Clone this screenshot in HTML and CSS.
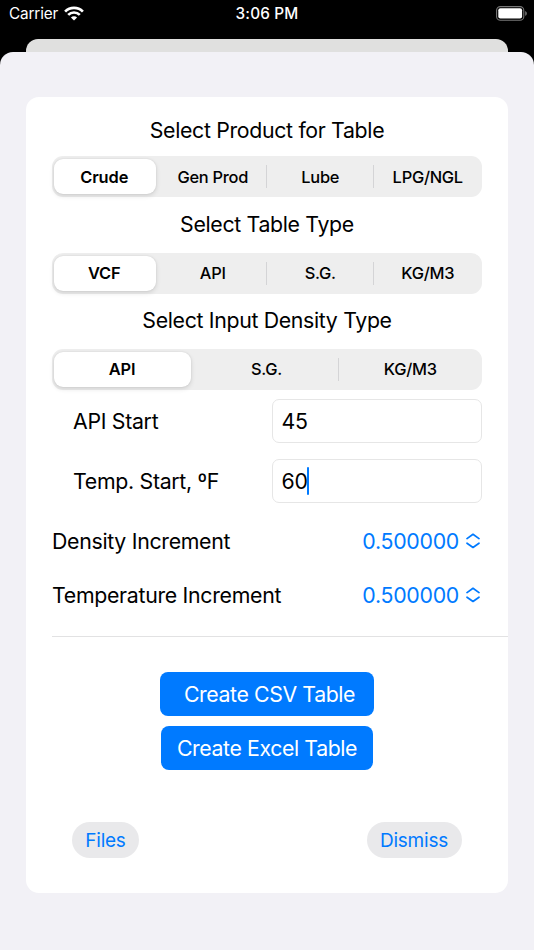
FILE: index.html
```html
<!DOCTYPE html>
<html lang="en">
<head>
<meta charset="utf-8">
<title>Create Table</title>
<link rel="stylesheet" href="styles.css">
</head>
<body>
<header class="status">
  <div class="status-left">
    <span class="carrier">Carrier</span>
    <svg class="wifi" viewBox="0 0 20 15" width="20" height="15">
      <g fill="none" stroke="#fff" stroke-width="2.7">
        <path d="M1.1 5.6A12.6 12.6 0 0 1 18.9 5.6"/>
        <path d="M4.2 8.9A8.2 8.2 0 0 1 15.8 8.9"/>
      </g>
      <path d="M10 14.6L6.9 11.5A4.4 4.4 0 0 1 13.1 11.5Z" fill="#fff"/>
    </svg>
  </div>
  <span class="time">3:06 PM</span>
  <div class="status-right">
    <svg viewBox="0 0 32 15" width="32" height="15">
      <rect x=".6" y=".6" width="27.2" height="13.6" rx="3.8" fill="none" stroke="#777" stroke-width="1.1"/>
      <rect x="2.3" y="2.3" width="23.8" height="10.2" rx="2" fill="#fff"/>
      <path d="M29.2 5v4.8c1-.4 1.6-1.3 1.6-2.4s-.6-2-1.6-2.4z" fill="#777"/>
    </svg>
  </div>
</header>
<div class="behind"></div>
<main class="sheet">
  <section class="card">
    <h2 class="title t1">Select Product for Table</h2>
    <div class="segments four">
      <button class="segment on">Crude</button>
      <button class="segment">Gen Prod</button>
      <button class="segment line">Lube</button>
      <button class="segment line">LPG/NGL</button>
    </div>
    <h2 class="title t2">Select Table Type</h2>
    <div class="segments four">
      <button class="segment on">VCF</button>
      <button class="segment">API</button>
      <button class="segment line">S.G.</button>
      <button class="segment line">KG/M3</button>
    </div>
    <h2 class="title t3">Select Input Density Type</h2>
    <div class="segments three">
      <button class="segment on">API</button>
      <button class="segment">S.G.</button>
      <button class="segment line">KG/M3</button>
    </div>
    <div class="field-row">
      <span class="label">API Start</span>
      <div class="field">45</div>
    </div>
    <div class="field-row">
      <span class="label">Temp. Start, ºF</span>
      <div class="field">60<i class="caret"></i></div>
    </div>
    <div class="picker-row">
      <span class="label">Density Increment</span>
      <span class="value"><span class="number">0.500000</span>
        <svg viewBox="0 0 14 16" width="14" height="16"><path d="M1 5.6L7 1.3l6 4.3M1 10.2l6 4.3 6-4.3"/></svg></span>
    </div>
    <div class="picker-row">
      <span class="label">Temperature Increment</span>
      <span class="value"><span class="number">0.500000</span>
        <svg viewBox="0 0 14 16" width="14" height="16"><path d="M1 5.6L7 1.3l6 4.3M1 10.2l6 4.3 6-4.3"/></svg></span>
    </div>
    <div class="divider"></div>
    <div class="actions">
      <button class="primary csv">Create CSV Table</button>
      <button class="primary excel">Create Excel Table</button>
    </div>
    <footer class="footer">
      <button class="pill files">Files</button>
      <button class="pill dismiss">Dismiss</button>
    </footer>
  </section>
</main>
</body>
</html>
```
FILE: styles.css
```css
* { box-sizing: border-box; }
body {
  margin: 0;
  width: 534px;
  height: 950px;
  overflow: hidden;
  background: #000;
  color: #000;
  font-family: Inter, "Liberation Sans", sans-serif;
  font-size: 21.3px;
  display: flex;
  flex-direction: column;
}
button {
  border: 0;
  margin: 0;
  padding: 0;
  background: none;
  color: inherit;
  font: inherit;
  letter-spacing: inherit;
  white-space: nowrap;
}
svg { display: block; }
.status {
  height: 39px;
  flex: none;
  display: grid;
  grid-template-columns: 1fr auto 1fr;
  padding: 0 9px;
  color: #fff;
  font-size: 15.3px;
  line-height: 28px;
}
.status-left { display: flex; gap: 6px; }
.wifi { margin-top: 6px; }
.carrier { letter-spacing: -.15px; }
.time { font-weight: 550; letter-spacing: .2px; }
.status-right { display: flex; justify-content: flex-end; padding-top: 6px; margin-right: -3px; }
.behind {
  flex: none;
  height: 13px;
  margin: 0 26px;
  background: #e0e0df;
  border-radius: 12px 12px 0 0;
}
.sheet {
  flex: 1;
  background: #f2f1f6;
  border-radius: 13px 13px 0 0;
  padding: 45px 26px 57px;
}
.card {
  height: 796px;
  background: #fff;
  border-radius: 13px;
  padding: 11px 26px 0;
}
.title {
  margin: 0;
  font-size: 21.3px;
  font-weight: 400;
  letter-spacing: -.33px;
  text-align: center;
  white-space: nowrap;
}
.t1 { height: 48px; line-height: 44px; }
.t2 { height: 56px; line-height: 54px; }
.t3 { height: 55px; line-height: 52px; }
.segments {
  height: 41px;
  display: grid;
  background: #eee;
  border-radius: 11px;
  font-size: 16.4px;
  font-weight: 500;
  letter-spacing: -.25px;
}
.four { grid-template-columns: repeat(4, 1fr); }
.three { grid-template-columns: repeat(3, 1fr); }
.segment { position: relative; padding-right: 1px; }
.three .line { padding-right: 0; }
.title ~ .title + .segments .segment { padding-bottom: 2px; }
.on {
  margin: 3px 4px 3px 2px;
  background: #fff;
  border-radius: 9px;
  font-weight: 570;
  letter-spacing: -.1px;
  box-shadow: 0 2px 5px rgba(0,0,0,.12), 0 0 2px rgba(0,0,0,.1);
}
.line::before {
  content: "";
  position: absolute;
  left: -1px;
  top: 9px;
  width: 1px;
  height: 23px;
  background: #d4d4d6;
}
.line + .line::before { left: -2px; }
.field-row {
  display: flex;
  align-items: center;
  justify-content: space-between;
  height: 44px;
  margin-top: 9px;
  padding-left: 21px;
}
.field-row + .field-row { margin-top: 15.5px; }
.label { white-space: nowrap; letter-spacing: -.3px; }
.field {
  display: flex;
  align-items: center;
  width: 210px;
  height: 44px;
  padding-left: 8.5px;
  border: 1px solid #e6e6e6;
  border-radius: 7px;
  letter-spacing: -.2px;
}
.caret { width: 2px; height: 28px; border-radius: 1px; background: #007aff; margin-left: -1px; }
.picker-row {
  display: flex;
  justify-content: space-between;
  align-items: center;
  height: 54.5px;
}
.field-row + .picker-row { margin-top: 11px; }
.value { display: flex; align-items: center; gap: 7px; color: #007aff; padding-right: 2px; }
.number { letter-spacing: -.27px; }
.value path {
  fill: none;
  stroke: #007aff;
  stroke-width: 1.7;
  stroke-linecap: round;
  stroke-linejoin: round;
}
.divider { height: 1px; margin: 13.5px -26px 0 0; background: #e2e2e3; }
.actions {
  display: flex;
  flex-direction: column;
  align-items: center;
  gap: 10.5px;
  margin-top: 34.6px;
}
.primary {
  height: 44px;
  background: #007aff;
  color: #fff;
  border-radius: 8px;
  letter-spacing: -.4px;
}
.csv { width: 214px; padding-left: 5px; }
.excel { width: 212px; }
.footer {
  display: flex;
  justify-content: space-between;
  margin-top: 51.9px;
  padding: 0 20px;
  font-size: 19px;
  letter-spacing: -.23px;
}
.pill {
  height: 36px;
  padding-top: 1px;
  border-radius: 18px;
  background: #e9e9eb;
  color: #007aff;
}
.files { width: 67px; }
.dismiss { width: 95px; padding-right: 1px; }
```
